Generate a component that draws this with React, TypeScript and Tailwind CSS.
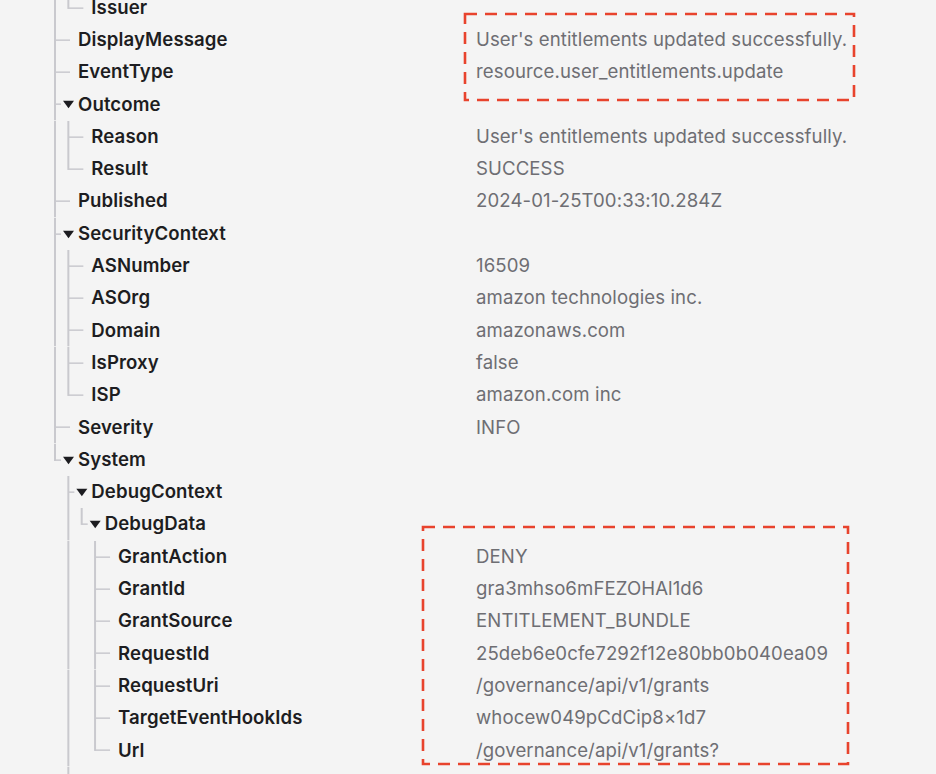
type Row = {
  guides: string
  label?: string
  value?: string
  open?: boolean
}

const rows: Row[] = [
  { guides: '│└', label: 'Issuer' },
  { guides: '├', label: 'DisplayMessage', value: "User's entitlements updated successfully." },
  { guides: '├', label: 'EventType', value: 'resource.user_entitlements.update' },
  { guides: '├', label: 'Outcome', open: true },
  { guides: '│├', label: 'Reason', value: "User's entitlements updated successfully." },
  { guides: '│└', label: 'Result', value: 'SUCCESS' },
  { guides: '├', label: 'Published', value: '2024-01-25T00:33:10.284Z' },
  { guides: '├', label: 'SecurityContext', open: true },
  { guides: '│├', label: 'ASNumber', value: '16509' },
  { guides: '│├', label: 'ASOrg', value: 'amazon technologies inc.' },
  { guides: '│├', label: 'Domain', value: 'amazonaws.com' },
  { guides: '│├', label: 'IsProxy', value: 'false' },
  { guides: '│└', label: 'ISP', value: 'amazon.com inc' },
  { guides: '├', label: 'Severity', value: 'INFO' },
  { guides: '└', label: 'System', open: true },
  { guides: ' ├', label: 'DebugContext', open: true },
  { guides: ' │└', label: 'DebugData', open: true },
  { guides: ' │ ├', label: 'GrantAction', value: 'DENY' },
  { guides: ' │ ├', label: 'GrantId', value: 'gra3mhso6mFEZOHAl1d6' },
  { guides: ' │ ├', label: 'GrantSource', value: 'ENTITLEMENT_BUNDLE' },
  { guides: ' │ ├', label: 'RequestId', value: '25deb6e0cfe7292f12e80bb0b040ea09' },
  { guides: ' │ ├', label: 'RequestUri', value: '/governance/api/v1/grants' },
  { guides: ' │ ├', label: 'TargetEventHookIds', value: 'whocew049pCdCip8×1d7' },
  { guides: ' │ └', label: 'Url', value: '/governance/api/v1/grants?' },
  { guides: ' │' },
]

const ROW_H = 32.3
const STEP = 13.35
const LINE = '#c9c9ce'

function Guides({ row }: { row: Row }) {
  const depth = row.guides.length
  const width = 78 + (depth - 1) * STEP
  const mid = ROW_H / 2
  return (
    <svg width={width} height={ROW_H} className="shrink-0">
      {row.guides.split('').map((g, i) => {
        const x = 55 + i * STEP
        if (g === '│') return <line key={i} x1={x} y1={0} x2={x} y2={ROW_H} stroke={LINE} strokeWidth={2} />
        if (g === '├' || g === '└') {
          const isLast = g === '└'
          const end = row.open ? x + 6 : x + 15
          return (
            <g key={i}>
              <line x1={x} y1={0} x2={x} y2={isLast ? mid + 0.75 : ROW_H} stroke={LINE} strokeWidth={2} />
              {row.label && <line x1={x} y1={mid} x2={end} y2={mid} stroke={LINE} strokeWidth={1.5} />}
              {row.open && <path d={`M${x + 8} ${mid - 3.5} L${x + 19} ${mid - 3.5} L${x + 13.5} ${mid + 4} Z`} fill="#1c1c20" />}
            </g>
          )
        }
        return null
      })}
    </svg>
  )
}

function DashBox({ x, y, w, h }: { x: number; y: number; w: number; h: number }) {
  return (
    <svg className="pointer-events-none absolute" style={{ left: x - 2, top: y - 2 }} width={w + 4} height={h + 4}>
      <rect x={2} y={2} width={w} height={h} fill="none" stroke="#e8432d" strokeWidth={2.6} strokeDasharray="12 8" />
    </svg>
  )
}

export default function App() {
  return (
    <div className="relative h-[774px] w-full overflow-hidden bg-[#f4f4f4] font-['Inter','Liberation_Sans',sans-serif]">
      <div className="mt-[-8.5px] flex flex-col">
        {rows.map((row, i) => (
          <div key={i} className="flex h-[32.3px] items-center">
            <div className="flex w-[476px] shrink-0 items-center">
              <Guides row={row} />
              {row.label && (
                <span className="whitespace-nowrap text-[18.6px] font-semibold tracking-[0.1px] text-[#1d1d21]">{row.label}</span>
              )}
            </div>
            {row.value && (
              <span className="whitespace-nowrap text-[18.6px] tracking-[0.1px] text-[#6e6e73]">{row.value}</span>
            )}
          </div>
        ))}
      </div>
      <DashBox x={465} y={14} w={389} h={86} />
      <DashBox x={423} y={527} w={425} h={237} />
    </div>
  )
}
